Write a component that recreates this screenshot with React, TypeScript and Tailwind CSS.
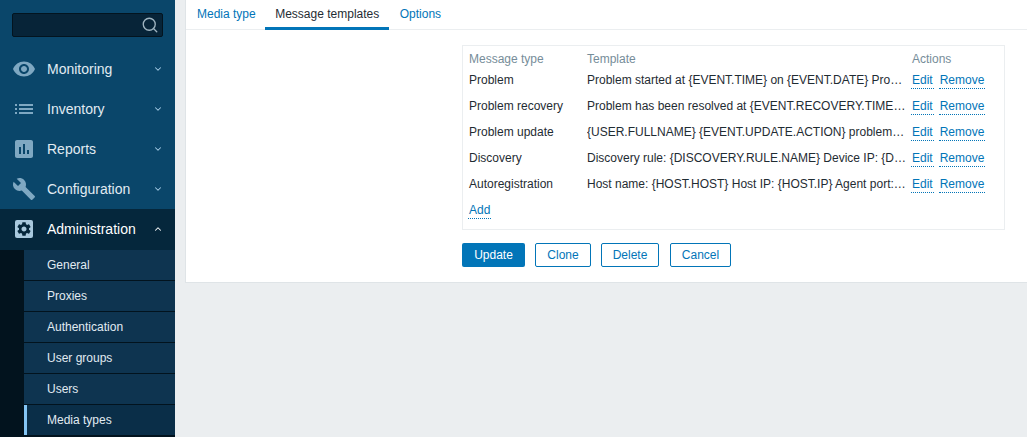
import React from 'react';
import { ChevronDown, ChevronUp, Search } from 'lucide-react';

const paths: Record<string, string> = {
  eye: 'M12 4.5C7 4.5 2.73 7.61 1 12c1.73 4.39 6 7.5 11 7.5s9.27-3.11 11-7.5c-1.73-4.39-6-7.5-11-7.5zM12 17c-2.76 0-5-2.24-5-5s2.24-5 5-5 5 2.24 5 5-2.24 5-5 5zm0-8c-1.66 0-3 1.34-3 3s1.34 3 3 3 3-1.34 3-3-1.34-3-3-3z',
  list: 'M3 13h2v-2H3v2zm0 4h2v-2H3v2zm0-8h2V7H3v2zm4 4h14v-2H7v2zm0 4h14v-2H7v2zM7 7v2h14V7H7z',
  chart: 'M19 3H5c-1.1 0-2 .9-2 2v14c0 1.1.9 2 2 2h14c1.1 0 2-.9 2-2V5c0-1.1-.9-2-2-2zM9 17H7v-7h2v7zm4 0h-2V7h2v10zm4 0h-2v-4h2v4z',
  wrench: 'M22.7 19l-9.1-9.1c.9-2.3.4-5-1.5-6.9-2-2-5-2.4-7.4-1.3L9 6 6 9 1.6 4.7C.4 7.1.9 10.1 2.9 12.1c1.9 1.9 4.6 2.4 6.9 1.5l9.1 9.1c.4.4 1 .4 1.4 0l2.3-2.3c.5-.4.5-1.1.1-1.4z',
};

const gear = 'M19.14 12.94c.04-.3.06-.61.06-.94 0-.32-.02-.64-.07-.94l2.03-1.58c.18-.14.23-.41.12-.61l-1.92-3.32c-.12-.22-.37-.29-.59-.22l-2.39.96c-.5-.38-1.03-.7-1.62-.94l-.36-2.54c-.04-.24-.24-.41-.48-.41h-3.84c-.24 0-.43.17-.47.41l-.36 2.54c-.59.24-1.13.57-1.62.94l-2.39-.96c-.22-.08-.47 0-.59.22L2.74 8.87c-.12.21-.08.47.12.61l2.03 1.58c-.05.3-.09.63-.09.94s.02.64.07.94l-2.03 1.58c-.18.14-.23.41-.12.61l1.92 3.32c.12.22.37.29.59.22l2.39-.96c.5.38 1.03.7 1.62.94l.36 2.54c.05.24.24.41.48.41h3.84c.24 0 .44-.17.47-.41l.36-2.54c.59-.24 1.13-.56 1.62-.94l2.39.96c.22.08.47 0 .59-.22l1.92-3.32c.12-.22.07-.47-.12-.61l-2.01-1.58zM12 15.6c-1.98 0-3.6-1.62-3.6-3.6s1.62-3.6 3.6-3.6 3.6 1.62 3.6 3.6-1.62 3.6-3.6 3.6z';

const NavIcon = ({ name }: { name: string }) => (
  <svg viewBox="0 0 24 24" className="w-6 h-6 fill-[#7fa8c2] shrink-0">
    <path d={paths[name]} />
  </svg>
);

const AdminIcon = () => (
  <svg viewBox="0 0 24 24" className="w-6 h-6 shrink-0">
    <rect x="3" y="3" width="18" height="18" rx="2" className="fill-[#a9c9de]" />
    <g transform="translate(3.6 3.6) scale(0.7)">
      <path d={gear} className="fill-[#05273c]" />
    </g>
  </svg>
);

const menu = [
  { label: 'Monitoring', icon: 'eye' },
  { label: 'Inventory', icon: 'list' },
  { label: 'Reports', icon: 'chart' },
  { label: 'Configuration', icon: 'wrench' },
];

const submenu = ['General', 'Proxies', 'Authentication', 'User groups', 'Users', 'Media types'];

const templates = [
  ['Problem', 'Problem started at {EVENT.TIME} on {EVENT.DATE} Problem name: {EVENT.NAME} Host: {HOST.NAME}'],
  ['Problem recovery', 'Problem has been resolved at {EVENT.RECOVERY.TIME} on {EVENT.RECOVERY.DATE} Problem name'],
  ['Problem update', '{USER.FULLNAME} {EVENT.UPDATE.ACTION} problem at {EVENT.UPDATE.DATE} {EVENT.UPDATE.TIME}'],
  ['Discovery', 'Discovery rule: {DISCOVERY.RULE.NAME} Device IP: {DISCOVERY.DEVICE.IPADDRESS} Device DNS'],
  ['Autoregistration', 'Host name: {HOST.HOST} Host IP: {HOST.IP} Agent port: {HOST.PORT}'],
];

const DottedLink = ({ children }: { children: React.ReactNode }) => (
  <a className="text-[#0275b8] border-b border-dotted border-[#0275b8] leading-[15px] inline-block px-[1px]">{children}</a>
);

const Sidebar = () => (
  <aside className="w-[175px] shrink-0 h-full bg-[#0a466a] flex flex-col overflow-hidden">
    <div className="px-3 pt-[13px] pb-[12px]">
      <div className="h-[24px] bg-[#072438] border border-[#03141f] rounded-[2px] flex items-center justify-end pr-[3px]">
        <Search size={18} className="text-[#9fb4c0]" strokeWidth={1.8} />
      </div>
    </div>
    {menu.map(m => (
      <div key={m.label} className="h-10 flex items-center pl-3 pr-[12px] text-[#e1ebf2] text-[14px]">
        <NavIcon name={m.icon} />
        <span className="ml-[11px] flex-1">{m.label}</span>
        <ChevronDown size={10} strokeWidth={2.5} className="text-[#a6cce6]" />
      </div>
    ))}
    <div className="h-[41px] pb-[1px] flex items-center pl-3 pr-[12px] bg-[#05273c] text-white text-[14px] shrink-0">
      <AdminIcon />
      <span className="ml-[11px] flex-1">Administration</span>
      <ChevronUp size={10} strokeWidth={2.5} className="text-white" />
    </div>
    <div className="flex-1 bg-[#02131e] pl-6">
      {submenu.map(s => (
        <div
          key={s}
          className={`h-[31px] flex items-center pl-[23px] text-[12px] text-[#e1ebf2] border-b border-[#02131e] ${s === 'Media types' ? 'bg-[#0a2e48] relative' : 'bg-[#0e3450]'}`}
        >
          {s === 'Media types' && <span className="absolute left-0 top-0 bottom-0 w-[3px] bg-[#84c5f4]" />}
          {s}
        </div>
      ))}
    </div>
  </aside>
);

const App: React.FC = () => {
  return (
    <div className="w-[1027px] h-[437px] flex bg-[#ebeef0] overflow-hidden font-['Liberation_Sans',Arial,sans-serif] text-[12px]">
      <Sidebar />
      <main className="flex-1 pl-[10px]">
        <div className="bg-white border-l border-b border-[#dfe4e7] h-[283px]">
          {/* TABS */}
          <div className="h-[30px] flex border-b border-[#ebeef0] pl-[1px]">
            <div className="h-[30px] pl-[10px] pr-[9px] flex items-center text-[#0275b8] pb-[2px]">Media type</div>
            <div className="h-[30px] w-[124px] pl-[10px] flex items-center text-[#1f2c33] border-b-[3px] border-[#0275b8]"><span className="pl-[0.5px]">Message templates</span></div>
            <div className="h-[30px] pl-[11px] pr-[10px] flex items-center text-[#0275b8] pb-[2px]">Options</div>
          </div>

          {/* FORM */}
          <div className="pl-[276px] pt-[15px] w-[819px]">
            <div className="border border-[#ebeef0] px-[6px] pt-[4px] h-[185px]">
              <div className="grid grid-cols-[118px_325px_1fr] h-[18px] items-center text-[#768d99]">
                <span>Message type</span>
                <span>Template</span>
                <span>Actions</span>
              </div>
              {templates.map(([type, text]) => (
                <div key={type} className="grid grid-cols-[118px_325px_1fr] h-[26px] items-start pt-[3px] text-[#1f2c33]">
                  <span>{type}</span>
                  <span className="truncate pr-[6px]">{text}</span>
                  <span className="flex gap-[5px] -ml-[1px] pt-[2px]">
                    <DottedLink>Edit</DottedLink>
                    <DottedLink>Remove</DottedLink>
                  </span>
                </div>
              ))}
              <div className="pt-[3px] -ml-[1px]">
                <DottedLink>Add</DottedLink>
              </div>
            </div>

            <div className="flex gap-[10px] mt-[13px]">
              <button className="h-6 w-[63px] bg-[#0275b8] text-white rounded-[2px]">Update</button>
              <button className="h-6 w-[56px] border border-[#0275b8] text-[#0275b8] rounded-[2px]">Clone</button>
              <button className="h-6 w-[58px] border border-[#0275b8] text-[#0275b8] rounded-[2px]">Delete</button>
              <button className="h-6 w-[61px] ml-[1px] border border-[#0275b8] text-[#0275b8] rounded-[2px]">Cancel</button>
            </div>
          </div>
        </div>
      </main>
    </div>
  );
};

export default App;
